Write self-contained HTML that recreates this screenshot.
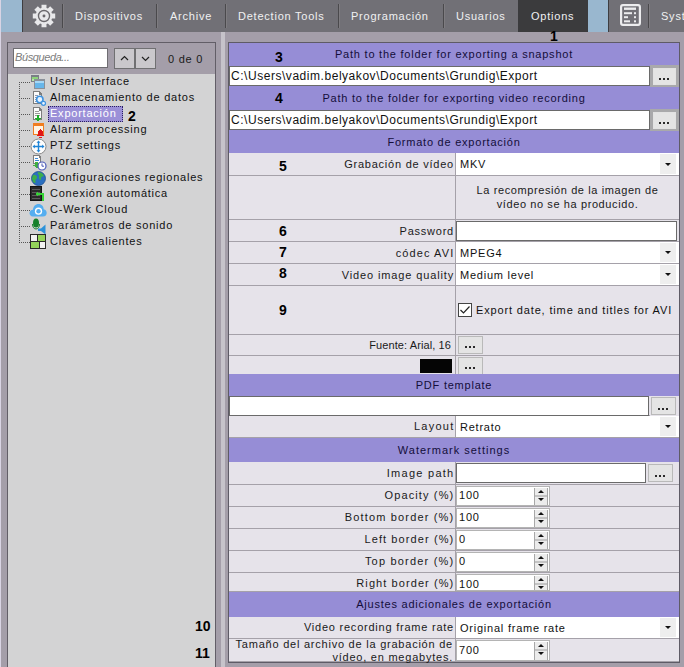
<!DOCTYPE html>
<html><head><meta charset="utf-8">
<style>
*{box-sizing:border-box;margin:0;padding:0}
html,body{width:684px;height:667px;overflow:hidden;background:#a49ea9;font-family:"Liberation Sans",sans-serif;font-size:11px;letter-spacing:0.77px;color:#1a1a1a}
.a{position:absolute}
.t{position:absolute;white-space:pre;line-height:14px}
#tb{left:0;top:0;width:684px;height:32px;background:#717076}
.sep{position:absolute;top:4px;width:1px;height:24px;background:#4a494c}
.tbt{position:absolute;top:9px;color:#f0f0f2;font-size:11px;line-height:14px;white-space:pre}
.hdr{position:absolute;left:229px;width:450px;background:#9189d5;color:#1b1540;text-align:center;line-height:14px}
.row{position:absolute;left:229px;width:450px;background:#e6e3ea;border-bottom:1px solid #a9a9ab}
.lbl{position:absolute;right:227px;white-space:pre;line-height:14px}
.cell{position:absolute;left:456px;width:223px;border-left:1px solid #a9a9ab}
.num{position:absolute;font-weight:bold;font-size:14px;letter-spacing:0;color:#000;line-height:16px}
.tbox{position:absolute;background:#fff;border:1px solid #6d6d6d}
.btn{position:absolute;background:#e4e4e4;border:1px solid #b9b9b9;text-align:center;font-weight:bold;font-size:11px;letter-spacing:1px;line-height:8px;color:#1a1a1a}
.combo{position:absolute;left:456px;width:222px;background:#fff}
.arr{position:absolute;right:2px;top:2px;width:17px;background:#ececec}
.arr:after{content:"";position:absolute;left:6px;top:8px;border-left:3px solid transparent;border-right:3px solid transparent;border-top:3px solid #111}
.spin{position:absolute;left:456px;width:93px;background:#fff;border:1px solid #7a7a7a}
.tree{position:absolute;left:50px;white-space:pre;line-height:14px;color:#111}
</style></head><body>

<!-- toolbar -->
<div id="tb" class="a"></div>
<div class="a" style="left:0;top:0;width:1px;height:667px;background:#d9d4e4"></div>
<div class="a" style="left:1px;top:0;width:21px;height:32px;background:#99b7cf"></div>
<div class="a" style="left:22px;top:0;width:1px;height:32px;background:#3e3d40"></div>
<div class="a" style="left:518px;top:0;width:70px;height:32px;background:#3b3b3d"></div>
<div class="a" style="left:588px;top:0;width:20px;height:32px;background:#99b7cf"></div>
<div class="a" style="left:608px;top:0;width:1px;height:32px;background:#3e3d40"></div>
<div class="sep" style="left:62px"></div>
<div class="sep" style="left:63px;background:#7e7c80"></div>
<div class="sep" style="left:156px"></div>
<div class="sep" style="left:157px;background:#7e7c80"></div>
<div class="sep" style="left:225px"></div>
<div class="sep" style="left:226px;background:#7e7c80"></div>
<div class="sep" style="left:338px"></div>
<div class="sep" style="left:339px;background:#7e7c80"></div>
<div class="sep" style="left:443px"></div>
<div class="sep" style="left:444px;background:#7e7c80"></div>
<div class="sep" style="left:648px"></div>
<div class="sep" style="left:649px;background:#7e7c80"></div>
<div class="tbt" style="left:75px">Dispositivos</div>
<div class="tbt" style="left:170px">Archive</div>
<div class="tbt" style="left:238px">Detection Tools</div>
<div class="tbt" style="left:351px">Programación</div>
<div class="tbt" style="left:456px">Usuarios</div>
<div class="tbt" style="left:531px">Options</div>
<div class="tbt" style="left:661px">Syst</div>
<!-- gear -->
<svg class="a" style="left:32px;top:4px" width="24" height="24" viewBox="0 0 23 23">
<path fill="#e8e8ea" d="M18.89 8.44 L19.14 9.14 L22.23 9.10 L22.23 13.90 L19.14 13.86 L18.89 14.56 L18.58 15.23 L20.79 17.39 L17.39 20.79 L15.23 18.58 L14.56 18.89 L13.86 19.14 L13.90 22.23 L9.10 22.23 L9.14 19.14 L8.44 18.89 L7.77 18.58 L5.61 20.79 L2.21 17.39 L4.42 15.23 L4.11 14.56 L3.86 13.86 L0.77 13.90 L0.77 9.10 L3.86 9.14 L4.11 8.44 L4.42 7.77 L2.21 5.61 L5.61 2.21 L7.77 4.42 L8.44 4.11 L9.14 3.86 L9.10 0.77 L13.90 0.77 L13.86 3.86 L14.56 4.11 L15.23 4.42 L17.39 2.21 L20.79 5.61 L18.58 7.77Z"/>
<circle cx="11.5" cy="11.5" r="5.3" fill="none" stroke="#6a686c" stroke-width="1.3"/>
<circle cx="11.5" cy="11.5" r="1.4" fill="#6a686c"/>
</svg>
<!-- doc icon -->
<svg class="a" style="left:620px;top:4px" width="21" height="22" viewBox="0 0 21 22">
<rect x="1.1" y="1.1" width="18.8" height="19.8" rx="1.8" fill="none" stroke="#ececee" stroke-width="2.2"/>
<rect x="4" y="3.5" width="12" height="2.4" fill="#ececee"/>
<rect x="4" y="8.2" width="8" height="2" fill="#ececee"/>
<rect x="14" y="8.2" width="2" height="2" fill="#ececee"/>
<rect x="4" y="12.2" width="4" height="2" fill="#ececee"/>
<rect x="14" y="12.2" width="2" height="2" fill="#ececee"/>
<rect x="4" y="16.3" width="6" height="2" fill="#ececee"/>
<rect x="14" y="16.3" width="2" height="2" fill="#ececee"/>
</svg>

<!-- left panel -->
<div class="a" style="left:7px;top:42px;width:209px;height:625px;background:#d3d3d4;border:1px solid #625e67;border-bottom:none"></div>
<div class="a" style="left:8px;top:43px;width:207px;height:31px;background:#a49ea9"></div>
<div class="a" style="left:13px;top:48px;width:95px;height:20px;background:#fff;border:1px solid #6f6d72"></div>
<div class="t" style="left:15px;top:50px;font-style:italic;color:#7c7c7c;letter-spacing:-0.4px">Búsqueda...</div>
<div class="a" style="left:114px;top:48px;width:21px;height:21px;background:#cac8cc;border:1px solid #707072"></div>
<div class="a" style="left:135px;top:48px;width:21px;height:21px;background:#cac8cc;border:1px solid #707072"></div>
<svg class="a" style="left:114px;top:48px" width="42" height="21"><path d="M7 12l3.5-3.5L14 12M28 9l3.5 3.5L35 9" fill="none" stroke="#222" stroke-width="1.2"/></svg>
<div class="t" style="left:168px;top:52px;color:#1a1a1a">0 de 0</div>
<!-- TREE -->
<svg class="a" style="left:0;top:0" width="220" height="260">
<path d="M19.5 82V242" stroke="#555" stroke-width="1" stroke-dasharray="1 1" fill="none"/>
<path d="M19 82.5H30" stroke="#555" stroke-width="1" stroke-dasharray="1 1" fill="none"/>
<path d="M19 98.5H30" stroke="#555" stroke-width="1" stroke-dasharray="1 1" fill="none"/>
<path d="M19 114.5H30" stroke="#555" stroke-width="1" stroke-dasharray="1 1" fill="none"/>
<path d="M19 130.5H30" stroke="#555" stroke-width="1" stroke-dasharray="1 1" fill="none"/>
<path d="M19 146.5H30" stroke="#555" stroke-width="1" stroke-dasharray="1 1" fill="none"/>
<path d="M19 162.5H30" stroke="#555" stroke-width="1" stroke-dasharray="1 1" fill="none"/>
<path d="M19 178.5H30" stroke="#555" stroke-width="1" stroke-dasharray="1 1" fill="none"/>
<path d="M19 194.5H30" stroke="#555" stroke-width="1" stroke-dasharray="1 1" fill="none"/>
<path d="M19 210.5H30" stroke="#555" stroke-width="1" stroke-dasharray="1 1" fill="none"/>
<path d="M19 226.5H30" stroke="#555" stroke-width="1" stroke-dasharray="1 1" fill="none"/>
<path d="M19 242.5H30" stroke="#555" stroke-width="1" stroke-dasharray="1 1" fill="none"/>
</svg>
<div class="a" style="left:48px;top:106px;width:75px;height:16px;background:#9b90d8;border:1px dotted #2a2060"></div>
<div class="tree" style="top:74px;color:#111">User Interface</div>
<div class="tree" style="top:90px;color:#111">Almacenamiento de datos</div>
<div class="tree" style="top:106px;color:#ffffff">Exportación</div>
<div class="tree" style="top:122px;color:#111">Alarm processing</div>
<div class="tree" style="top:138px;color:#111">PTZ settings</div>
<div class="tree" style="top:154px;color:#111">Horario</div>
<div class="tree" style="top:170px;color:#111">Configuraciones regionales</div>
<div class="tree" style="top:186px;color:#111">Conexión automática</div>
<div class="tree" style="top:202px;color:#111">C-Werk Cloud</div>
<div class="tree" style="top:218px;color:#111">Parámetros de sonido</div>
<div class="tree" style="top:234px;color:#111">Claves calientes</div>

<svg class="a" style="left:30px;top:74px" width="16" height="16" shape-rendering="crispEdges">
 <rect x="1" y="1" width="8" height="7" fill="#7a7f86"/>
 <rect x="2" y="3" width="6" height="4" fill="#8ed47a"/>
 <rect x="2" y="5" width="6" height="2" fill="#b6e6a6"/>
 <rect x="4" y="5" width="11" height="10" fill="#8a9099"/>
 <rect x="5" y="7" width="9" height="7" fill="#67b6ea"/>
 <rect x="5" y="7" width="9" height="2" fill="#a6d8f6"/>
</svg>
<svg class="a" style="left:30px;top:90px" width="17" height="17" shape-rendering="crispEdges">
 <path d="M3 1h6l3 3v10H3z" fill="#7d7d7d"/>
 <path d="M4 2h5v3h2v8H4z" fill="#fbfbfb"/>
 <rect x="5" y="5" width="3" height="1" fill="#8a98b0"/>
 <rect x="5" y="7" width="5" height="1" fill="#8a98b0"/>
 <rect x="5" y="9" width="3" height="1" fill="#8a98b0"/>
 <rect x="5" y="11" width="3" height="1" fill="#8a98b0"/>
</svg>
<svg class="a" style="left:30px;top:90px" width="17" height="17">
 <circle cx="9.8" cy="9.5" r="3.2" fill="#e8f4ff" stroke="#3d92e0" stroke-width="1.6"/>
 <circle cx="13.5" cy="13.3" r="2" fill="#e8f4ff" stroke="#3d92e0" stroke-width="1.2"/>
</svg>
<svg class="a" style="left:30px;top:106px" width="16" height="17" shape-rendering="crispEdges">
 <path d="M3 1h6l3 3v10H3z" fill="#7d7d7d"/>
 <path d="M4 2h5v3h2v8H4z" fill="#fbfbfb"/>
 <rect x="5" y="5" width="4" height="1" fill="#9a9a9a"/>
 <rect x="5" y="7" width="5" height="1" fill="#9a9a9a"/>
 <rect x="5" y="9" width="5" height="1" fill="#9a9a9a"/>
 <rect x="7" y="9" width="2" height="4" fill="#1fae2a"/>
 <path d="M5 12h6v1h-1v1H9v1H7v-1H6v-1H5z" fill="#1fae2a"/>
</svg>
<svg class="a" style="left:30px;top:122px" width="17" height="17" shape-rendering="crispEdges">
 <rect x="3" y="1" width="11" height="12" fill="#f07d20"/>
 <rect x="4" y="4" width="9" height="8" fill="#fff4e4"/>
 <path d="M9 8h3v1h1v4h1v1H7v-1h1V9h1z" fill="#e01616"/>
 <rect x="10" y="7" width="1" height="1" fill="#e01616"/>
 <rect x="9" y="15" width="3" height="1" fill="#e01616"/>
</svg>
<svg class="a" style="left:30px;top:138px" width="17" height="17">
 <circle cx="8.5" cy="8.5" r="7.5" fill="#fdfdfd" stroke="#8a8a8a"/>
 <path d="M8.5 4v9M4 8.5h9" stroke="#1e84d6" stroke-width="1.4"/>
 <path d="M8.5 2.5l-2 2.3h4zM8.5 14.5l-2-2.3h4zM2.5 8.5l2.3-2v4zM14.5 8.5l-2.3-2v4z" fill="#1e84d6"/>
</svg>
<svg class="a" style="left:30px;top:154px" width="17" height="17" shape-rendering="crispEdges">
 <path d="M3 1h6l2 2v7H3z" fill="#7d7d7d"/>
 <path d="M4 2h5v2h1v5H4z" fill="#fbfbfb"/>
 <rect x="5" y="4" width="3" height="1" fill="#3a8ad8"/>
 <rect x="5" y="6" width="4" height="1" fill="#3a8ad8"/>
 <path d="M5 8h3v3h2v1H9v1H8v1H6v-1H5v-1H3v-1h2z" fill="#3fae3f"/>
</svg>
<svg class="a" style="left:30px;top:154px" width="17" height="17">
 <circle cx="12" cy="12" r="4" fill="#fff" stroke="#4a5ab8" stroke-width="1.2"/>
 <path d="M12 9.5v2.7h2" stroke="#4a5ab8" fill="none"/>
</svg>
<svg class="a" style="left:30px;top:170px" width="17" height="17">
 <circle cx="8.5" cy="8.5" r="7" fill="#2a6fc0"/>
 <path d="M3 5c2-.5 4 .5 4 2.5S5 9 5.5 11.5 3.5 13 2.5 11 1.8 6.5 3 5zM9 2c2.5.5 4.5 2 5 4.5-1.5-.5-3 .5-3 2.5s-1.5 1-2-1 1-2-.5-3.5S8 2 9 2z" fill="#3cae4c"/>
 <circle cx="8.5" cy="8.5" r="7" fill="none" stroke="#1d4f90" stroke-width=".8"/>
</svg>
<svg class="a" style="left:30px;top:186px" width="17" height="17" shape-rendering="crispEdges">
 <rect x="0" y="0" width="12" height="15" fill="#151515"/>
 <rect x="1" y="1" width="10" height="13" fill="#2a2a2a"/>
 <rect x="2" y="3" width="8" height="1" fill="#5c5c5c"/>
 <rect x="2" y="6" width="8" height="1" fill="#5c5c5c"/>
 <rect x="2" y="9" width="8" height="1" fill="#5c5c5c"/>
 <rect x="2" y="12" width="8" height="1" fill="#5c5c5c"/>
 <rect x="6" y="7" width="8" height="2" fill="#36d436"/>
 <rect x="12" y="7" width="2" height="8" fill="#36d436"/>
 <path d="M5 8l3-3v6z" fill="#36d436"/>
</svg>
<svg class="a" style="left:29px;top:202px" width="18" height="16">
 <path d="M4 14.5c-2.5 0-3.5-2-3.5-3.5S2 7.8 4 7.8C4.3 4.3 6.5 2 9.5 2s5.2 2.3 5.2 5.3c2 .4 3 1.9 3 3.6s-1.2 3.6-3.7 3.6z" fill="#55aef0"/>
 <circle cx="9.5" cy="9.2" r="3.6" fill="#fff"/>
 <circle cx="9.5" cy="9.2" r="2.2" fill="#55aef0"/>
</svg>
<svg class="a" style="left:29px;top:218px" width="18" height="17">
 <ellipse cx="7" cy="5" rx="3" ry="4.5" fill="#14802a"/>
 <path d="M3.5 6c0 3 1.5 5 3.5 5s3.5-2 3.5-5" stroke="#14802a" fill="none"/>
 <path d="M9 10.5h3l4.5-4v10L12 13H9z" fill="#2c92da"/>
</svg>
<svg class="a" style="left:30px;top:234px" width="16" height="15" shape-rendering="crispEdges">
 <rect x="0" y="0" width="16" height="15" fill="#2a2a2a"/>
 <rect x="1" y="1" width="6" height="6" fill="#f2f2f2"/>
 <rect x="8" y="1" width="7" height="6" fill="#94d45a"/>
 <rect x="1" y="8" width="8" height="6" fill="#94d45a"/>
 <rect x="10" y="8" width="5" height="6" fill="#f2f2f2"/>
</svg>

<!-- /TREE -->
<!-- splitter -->
<div class="a" style="left:221px;top:32px;width:4px;height:635px;background:#c6c3ca"></div>

<!-- right panel frame -->
<div class="a" style="left:228px;top:42px;width:452px;height:621px;border:1px solid #5e5b66;background:#e6e3ea"></div>
<!-- RIGHT -->
<div class="a" style="left:229px;top:43px;width:450px;height:22px;background:#968dd6"></div>
<div class="t" style="left:229px;width:450px;top:47px;text-align:center;color:#140e3a">Path to the folder for exporting a snapshot</div>
<div class="a" style="left:229px;top:65px;width:450px;height:22px;background:#968dd6"></div>
<div class="tbox" style="left:229px;top:66px;width:421px;height:20px;border-color:#6a6a6a"></div>
<div class="t" style="left:231px;top:69px;color:#111;font-size:12px;letter-spacing:0.54px">C:\Users\vadim.belyakov\Documents\Grundig\Export</div>
<div class="a" style="left:650px;top:65px;width:29px;height:22px;background:#a9a9ab"></div>
<div class="btn" style="left:653px;top:68px;width:23px;height:17px;border-color:#e2e2e2"></div>
<div class="a" style="left:659px;top:78px;width:2px;height:2px;background:#2a2a2a"></div>
<div class="a" style="left:663px;top:78px;width:2px;height:2px;background:#2a2a2a"></div>
<div class="a" style="left:667px;top:78px;width:2px;height:2px;background:#2a2a2a"></div>
<div class="num" style="left:275px;top:49px">3</div>
<div class="a" style="left:229px;top:87px;width:450px;height:22px;background:#968dd6"></div>
<div class="t" style="left:229px;width:450px;top:91px;text-align:center;color:#140e3a">Path to the folder for exporting video recording</div>
<div class="a" style="left:229px;top:109px;width:450px;height:22px;background:#968dd6"></div>
<div class="tbox" style="left:229px;top:110px;width:421px;height:20px;border-color:#6a6a6a"></div>
<div class="t" style="left:231px;top:113px;color:#111;font-size:12px;letter-spacing:0.54px">C:\Users\vadim.belyakov\Documents\Grundig\Export</div>
<div class="a" style="left:650px;top:109px;width:29px;height:22px;background:#a9a9ab"></div>
<div class="btn" style="left:653px;top:112px;width:23px;height:17px;border-color:#e2e2e2"></div>
<div class="a" style="left:659px;top:122px;width:2px;height:2px;background:#2a2a2a"></div>
<div class="a" style="left:663px;top:122px;width:2px;height:2px;background:#2a2a2a"></div>
<div class="a" style="left:667px;top:122px;width:2px;height:2px;background:#2a2a2a"></div>
<div class="num" style="left:275px;top:90px">4</div>
<div class="a" style="left:229px;top:131px;width:450px;height:22px;background:#968dd6"></div>
<div class="t" style="left:229px;width:450px;top:135px;text-align:center;color:#140e3a">Formato de exportación</div>
<div class="a" style="left:229px;top:153px;width:450px;height:22px;background:#e6e3ea"></div>
<div class="a" style="left:229px;top:175px;width:450px;height:1px;background:#a5a1a9"></div>
<div class="a" style="left:455px;top:153px;width:1px;height:22px;background:#a5a1a9"></div>
<div class="t" style="right:230.00px;top:157px;color:#1a1a1a;letter-spacing:0.77px">Grabación de vídeo</div>
<div class="a" style="left:456px;top:153px;width:223px;height:22px;background:#fff"></div>
<div class="a" style="left:660px;top:154px;width:16px;height:20px;background:#eeeeee"></div>
<div class="a" style="left:665px;top:163px;width:0;height:0;border-left:3px solid transparent;border-right:3px solid transparent;border-top:3.5px solid #111"></div>
<div class="t" style="left:460px;top:157px;color:#111">MKV</div>
<div class="num" style="left:279px;top:158px">5</div>
<div class="a" style="left:229px;top:176px;width:450px;height:43px;background:#e6e3ea"></div>
<div class="a" style="left:229px;top:219px;width:450px;height:1px;background:#a5a1a9"></div>
<div class="a" style="left:455px;top:176px;width:1px;height:43px;background:#a5a1a9"></div>
<div class="t" style="left:456px;width:223px;top:183px;text-align:center;line-height:14px;white-space:pre;color:#1a1a1a;letter-spacing:0.6px">La recompresión de la imagen de
vídeo no se ha producido.</div>
<div class="a" style="left:229px;top:220px;width:450px;height:21px;background:#e6e3ea"></div>
<div class="a" style="left:229px;top:241px;width:450px;height:1px;background:#a5a1a9"></div>
<div class="a" style="left:455px;top:220px;width:1px;height:21px;background:#a5a1a9"></div>
<div class="t" style="right:230.00px;top:224px;color:#1a1a1a;letter-spacing:0.77px">Password</div>
<div class="tbox" style="left:456px;top:221px;width:221px;height:20px;border-color:#6a6a6a"></div>
<div class="num" style="left:279px;top:223px">6</div>
<div class="a" style="left:229px;top:242px;width:450px;height:21px;background:#e6e3ea"></div>
<div class="a" style="left:229px;top:263px;width:450px;height:1px;background:#a5a1a9"></div>
<div class="a" style="left:455px;top:242px;width:1px;height:21px;background:#a5a1a9"></div>
<div class="t" style="right:229.67px;top:246px;color:#1a1a1a;letter-spacing:1.10px">códec AVI</div>
<div class="a" style="left:456px;top:242px;width:223px;height:21px;background:#fff"></div>
<div class="a" style="left:660px;top:243px;width:16px;height:19px;background:#eeeeee"></div>
<div class="a" style="left:665px;top:251px;width:0;height:0;border-left:3px solid transparent;border-right:3px solid transparent;border-top:3.5px solid #111"></div>
<div class="t" style="left:460px;top:246px;color:#111">MPEG4</div>
<div class="num" style="left:279px;top:244px">7</div>
<div class="a" style="left:229px;top:264px;width:450px;height:21px;background:#e6e3ea"></div>
<div class="a" style="left:229px;top:285px;width:450px;height:1px;background:#a5a1a9"></div>
<div class="a" style="left:455px;top:264px;width:1px;height:21px;background:#a5a1a9"></div>
<div class="t" style="right:229.90px;top:268px;color:#1a1a1a;letter-spacing:0.87px">Video image quality</div>
<div class="a" style="left:456px;top:264px;width:223px;height:21px;background:#fff"></div>
<div class="a" style="left:660px;top:265px;width:16px;height:19px;background:#eeeeee"></div>
<div class="a" style="left:665px;top:273px;width:0;height:0;border-left:3px solid transparent;border-right:3px solid transparent;border-top:3.5px solid #111"></div>
<div class="t" style="left:460px;top:268px;color:#111">Medium level</div>
<div class="num" style="left:279px;top:265px">8</div>
<div class="a" style="left:229px;top:286px;width:450px;height:48px;background:#e6e3ea"></div>
<div class="a" style="left:229px;top:334px;width:450px;height:1px;background:#a5a1a9"></div>
<div class="a" style="left:455px;top:286px;width:1px;height:48px;background:#a5a1a9"></div>
<div class="num" style="left:279px;top:302px">9</div>
<div class="a" style="left:458px;top:303px;width:14px;height:14px;background:#fff;border:1px solid #444"></div>
<svg class="a" style="left:458px;top:303px" width="14" height="14"><path d="M2.5 7l3 3 6-6.5" fill="none" stroke="#222" stroke-width="1.2"/></svg>
<div class="t" style="left:476px;top:303px;color:#111;letter-spacing:0.85px">Export date, time and titles for AVI</div>
<div class="a" style="left:229px;top:335px;width:450px;height:20px;background:#e6e3ea"></div>
<div class="a" style="left:229px;top:355px;width:450px;height:1px;background:#a5a1a9"></div>
<div class="a" style="left:455px;top:335px;width:1px;height:20px;background:#a5a1a9"></div>
<div class="t" style="right:233px;top:338px;color:#1a1a1a;letter-spacing:0.1px">Fuente: Arial, 16</div>
<div class="btn" style="left:458px;top:336px;width:25px;height:18px"></div>
<div class="a" style="left:465px;top:346px;width:2px;height:2px;background:#2a2a2a"></div>
<div class="a" style="left:469px;top:346px;width:2px;height:2px;background:#2a2a2a"></div>
<div class="a" style="left:473px;top:346px;width:2px;height:2px;background:#2a2a2a"></div>
<div class="a" style="left:229px;top:356px;width:450px;height:24px;background:#e6e3ea"></div>
<div class="a" style="left:229px;top:380px;width:450px;height:1px;background:#a5a1a9"></div>
<div class="a" style="left:455px;top:356px;width:1px;height:24px;background:#a5a1a9"></div>
<div class="a" style="left:420px;top:359px;width:32px;height:14px;background:#050505"></div>
<div class="btn" style="left:458px;top:357px;width:25px;height:18px"></div>
<div class="a" style="left:465px;top:367px;width:2px;height:2px;background:#2a2a2a"></div>
<div class="a" style="left:469px;top:367px;width:2px;height:2px;background:#2a2a2a"></div>
<div class="a" style="left:473px;top:367px;width:2px;height:2px;background:#2a2a2a"></div>
<div class="a" style="left:229px;top:374px;width:450px;height:22px;background:#968dd6"></div>
<div class="t" style="left:229px;width:450px;top:378px;text-align:center;color:#140e3a">PDF template</div>
<div class="a" style="left:229px;top:396px;width:450px;height:19px;background:#e6e3ea"></div>
<div class="a" style="left:229px;top:415px;width:450px;height:1px;background:#a5a1a9"></div>
<div class="tbox" style="left:229px;top:396px;width:420px;height:20px;border-color:#6a6a6a"></div>
<div class="a" style="left:650px;top:396px;width:29px;height:20px;background:#e6e3ea"></div>
<div class="btn" style="left:651px;top:397px;width:25px;height:18px"></div>
<div class="a" style="left:658px;top:408px;width:2px;height:2px;background:#2a2a2a"></div>
<div class="a" style="left:662px;top:408px;width:2px;height:2px;background:#2a2a2a"></div>
<div class="a" style="left:666px;top:408px;width:2px;height:2px;background:#2a2a2a"></div>
<div class="a" style="left:229px;top:416px;width:450px;height:21px;background:#e6e3ea"></div>
<div class="a" style="left:229px;top:437px;width:450px;height:1px;background:#a5a1a9"></div>
<div class="a" style="left:455px;top:416px;width:1px;height:21px;background:#a5a1a9"></div>
<div class="t" style="right:229.52px;top:419px;color:#1a1a1a;letter-spacing:1.25px">Layout</div>
<div class="a" style="left:456px;top:416px;width:223px;height:21px;background:#fff"></div>
<div class="a" style="left:660px;top:417px;width:16px;height:19px;background:#eeeeee"></div>
<div class="a" style="left:665px;top:425px;width:0;height:0;border-left:3px solid transparent;border-right:3px solid transparent;border-top:3.5px solid #111"></div>
<div class="t" style="left:460px;top:420px;color:#111">Retrato</div>
<div class="a" style="left:229px;top:438px;width:450px;height:24px;background:#968dd6"></div>
<div class="t" style="left:229px;width:450px;top:443px;text-align:center;color:#140e3a;letter-spacing:1px">Watermark settings</div>
<div class="a" style="left:229px;top:462px;width:450px;height:22px;background:#e6e3ea"></div>
<div class="a" style="left:229px;top:484px;width:450px;height:1px;background:#a5a1a9"></div>
<div class="a" style="left:455px;top:462px;width:1px;height:22px;background:#a5a1a9"></div>
<div class="t" style="right:229.50px;top:466px;color:#1a1a1a;letter-spacing:1.27px">Image path</div>
<div class="tbox" style="left:456px;top:463px;width:190px;height:20px;border-color:#6a6a6a"></div>
<div class="btn" style="left:648px;top:464px;width:25px;height:18px"></div>
<div class="a" style="left:655px;top:475px;width:2px;height:2px;background:#2a2a2a"></div>
<div class="a" style="left:659px;top:475px;width:2px;height:2px;background:#2a2a2a"></div>
<div class="a" style="left:663px;top:475px;width:2px;height:2px;background:#2a2a2a"></div>
<div class="a" style="left:229px;top:485px;width:450px;height:21px;background:#e6e3ea"></div>
<div class="a" style="left:229px;top:506px;width:450px;height:1px;background:#a5a1a9"></div>
<div class="a" style="left:455px;top:485px;width:1px;height:21px;background:#a5a1a9"></div>
<div class="t" style="right:229.64px;top:488px;color:#1a1a1a;letter-spacing:1.13px">Opacity (%)</div>
<div class="a" style="left:456px;top:486px;width:94px;height:20px;background:#fff;border:1px solid #b4b4b4"></div>
<div class="a" style="left:534px;top:488px;width:14px;height:17px;background:#ececec;border-left:1px solid #a8a8a8;border-right:1px solid #a8a8a8"></div>
<div class="a" style="left:535px;top:495px;width:12px;height:2px;background:#c4c4c4"></div>
<div class="a" style="left:538px;top:490px;width:0;height:0;border-left:3px solid transparent;border-right:3px solid transparent;border-bottom:3.5px solid #111"></div>
<div class="a" style="left:538px;top:498px;width:0;height:0;border-left:3px solid transparent;border-right:3px solid transparent;border-top:3.5px solid #111"></div>
<div class="t" style="left:459px;top:488px;color:#111">100</div>
<div class="a" style="left:229px;top:507px;width:450px;height:21px;background:#e6e3ea"></div>
<div class="a" style="left:229px;top:528px;width:450px;height:1px;background:#a5a1a9"></div>
<div class="a" style="left:455px;top:507px;width:1px;height:21px;background:#a5a1a9"></div>
<div class="t" style="right:229.60px;top:510px;color:#1a1a1a;letter-spacing:1.17px">Bottom border (%)</div>
<div class="a" style="left:456px;top:508px;width:94px;height:20px;background:#fff;border:1px solid #b4b4b4"></div>
<div class="a" style="left:534px;top:510px;width:14px;height:17px;background:#ececec;border-left:1px solid #a8a8a8;border-right:1px solid #a8a8a8"></div>
<div class="a" style="left:535px;top:517px;width:12px;height:2px;background:#c4c4c4"></div>
<div class="a" style="left:538px;top:512px;width:0;height:0;border-left:3px solid transparent;border-right:3px solid transparent;border-bottom:3.5px solid #111"></div>
<div class="a" style="left:538px;top:520px;width:0;height:0;border-left:3px solid transparent;border-right:3px solid transparent;border-top:3.5px solid #111"></div>
<div class="t" style="left:459px;top:510px;color:#111">100</div>
<div class="a" style="left:229px;top:529px;width:450px;height:21px;background:#e6e3ea"></div>
<div class="a" style="left:229px;top:550px;width:450px;height:1px;background:#a5a1a9"></div>
<div class="a" style="left:455px;top:529px;width:1px;height:21px;background:#a5a1a9"></div>
<div class="t" style="right:229.67px;top:532px;color:#1a1a1a;letter-spacing:1.10px">Left border (%)</div>
<div class="a" style="left:456px;top:530px;width:94px;height:20px;background:#fff;border:1px solid #b4b4b4"></div>
<div class="a" style="left:534px;top:532px;width:14px;height:17px;background:#ececec;border-left:1px solid #a8a8a8;border-right:1px solid #a8a8a8"></div>
<div class="a" style="left:535px;top:539px;width:12px;height:2px;background:#c4c4c4"></div>
<div class="a" style="left:538px;top:534px;width:0;height:0;border-left:3px solid transparent;border-right:3px solid transparent;border-bottom:3.5px solid #111"></div>
<div class="a" style="left:538px;top:542px;width:0;height:0;border-left:3px solid transparent;border-right:3px solid transparent;border-top:3.5px solid #111"></div>
<div class="t" style="left:459px;top:532px;color:#111">0</div>
<div class="a" style="left:229px;top:551px;width:450px;height:21px;background:#e6e3ea"></div>
<div class="a" style="left:229px;top:572px;width:450px;height:1px;background:#a5a1a9"></div>
<div class="a" style="left:455px;top:551px;width:1px;height:21px;background:#a5a1a9"></div>
<div class="t" style="right:229.57px;top:554px;color:#1a1a1a;letter-spacing:1.20px">Top border (%)</div>
<div class="a" style="left:456px;top:552px;width:94px;height:20px;background:#fff;border:1px solid #b4b4b4"></div>
<div class="a" style="left:534px;top:554px;width:14px;height:17px;background:#ececec;border-left:1px solid #a8a8a8;border-right:1px solid #a8a8a8"></div>
<div class="a" style="left:535px;top:561px;width:12px;height:2px;background:#c4c4c4"></div>
<div class="a" style="left:538px;top:556px;width:0;height:0;border-left:3px solid transparent;border-right:3px solid transparent;border-bottom:3.5px solid #111"></div>
<div class="a" style="left:538px;top:564px;width:0;height:0;border-left:3px solid transparent;border-right:3px solid transparent;border-top:3.5px solid #111"></div>
<div class="t" style="left:459px;top:554px;color:#111">0</div>
<div class="a" style="left:229px;top:573px;width:450px;height:18px;background:#e6e3ea"></div>
<div class="a" style="left:229px;top:591px;width:450px;height:1px;background:#a5a1a9"></div>
<div class="a" style="left:455px;top:573px;width:1px;height:18px;background:#a5a1a9"></div>
<div class="t" style="right:229.69px;top:576px;color:#1a1a1a;letter-spacing:1.08px">Right border (%)</div>
<div class="a" style="left:456px;top:574px;width:94px;height:17px;background:#fff;border:1px solid #b4b4b4"></div>
<div class="a" style="left:534px;top:576px;width:14px;height:14px;background:#ececec;border-left:1px solid #a8a8a8;border-right:1px solid #a8a8a8"></div>
<div class="a" style="left:535px;top:583px;width:12px;height:2px;background:#c4c4c4"></div>
<div class="a" style="left:538px;top:578px;width:0;height:0;border-left:3px solid transparent;border-right:3px solid transparent;border-bottom:3.5px solid #111"></div>
<div class="a" style="left:538px;top:586px;width:0;height:0;border-left:3px solid transparent;border-right:3px solid transparent;border-top:3.5px solid #111"></div>
<div class="t" style="left:459px;top:577px;color:#111">100</div>
<div class="a" style="left:229px;top:592px;width:450px;height:25px;background:#968dd6"></div>
<div class="t" style="left:229px;width:450px;top:597px;text-align:center;color:#140e3a">Ajustes adicionales de exportación</div>
<div class="a" style="left:229px;top:617px;width:450px;height:21px;background:#e6e3ea"></div>
<div class="a" style="left:229px;top:638px;width:450px;height:1px;background:#a5a1a9"></div>
<div class="a" style="left:455px;top:617px;width:1px;height:21px;background:#a5a1a9"></div>
<div class="t" style="right:230.00px;top:620px;color:#1a1a1a;letter-spacing:0.77px">Video recording frame rate</div>
<div class="a" style="left:456px;top:617px;width:223px;height:21px;background:#fff"></div>
<div class="a" style="left:660px;top:618px;width:16px;height:19px;background:#eeeeee"></div>
<div class="a" style="left:665px;top:626px;width:0;height:0;border-left:3px solid transparent;border-right:3px solid transparent;border-top:3.5px solid #111"></div>
<div class="t" style="left:460px;top:621px;color:#111">Original frame rate</div>
<div class="a" style="left:229px;top:639px;width:450px;height:22px;background:#e6e3ea"></div>
<div class="a" style="left:229px;top:661px;width:450px;height:1px;background:#a5a1a9"></div>
<div class="a" style="left:455px;top:639px;width:1px;height:22px;background:#a5a1a9"></div>
<div class="t" style="right:231px;top:638px;text-align:right;color:#1a1a1a;line-height:13px">Tamaño del archivo de la grabación de
vídeo, en megabytes.</div>
<div class="a" style="left:456px;top:640px;width:94px;height:21px;background:#fff;border:1px solid #b4b4b4"></div>
<div class="a" style="left:534px;top:642px;width:14px;height:18px;background:#ececec;border-left:1px solid #a8a8a8;border-right:1px solid #a8a8a8"></div>
<div class="a" style="left:535px;top:649px;width:12px;height:2px;background:#c4c4c4"></div>
<div class="a" style="left:538px;top:644px;width:0;height:0;border-left:3px solid transparent;border-right:3px solid transparent;border-bottom:3.5px solid #111"></div>
<div class="a" style="left:538px;top:652px;width:0;height:0;border-left:3px solid transparent;border-right:3px solid transparent;border-top:3.5px solid #111"></div>
<div class="t" style="left:459px;top:643px;color:#111">700</div>
<div class="num" style="left:195px;top:618px">10</div>
<div class="num" style="left:195px;top:645px">11</div>
<div class="num" style="left:550px;top:28px">1</div>
<div class="num" style="left:128px;top:108px">2</div>
<!-- /RIGHT -->
</body></html>
